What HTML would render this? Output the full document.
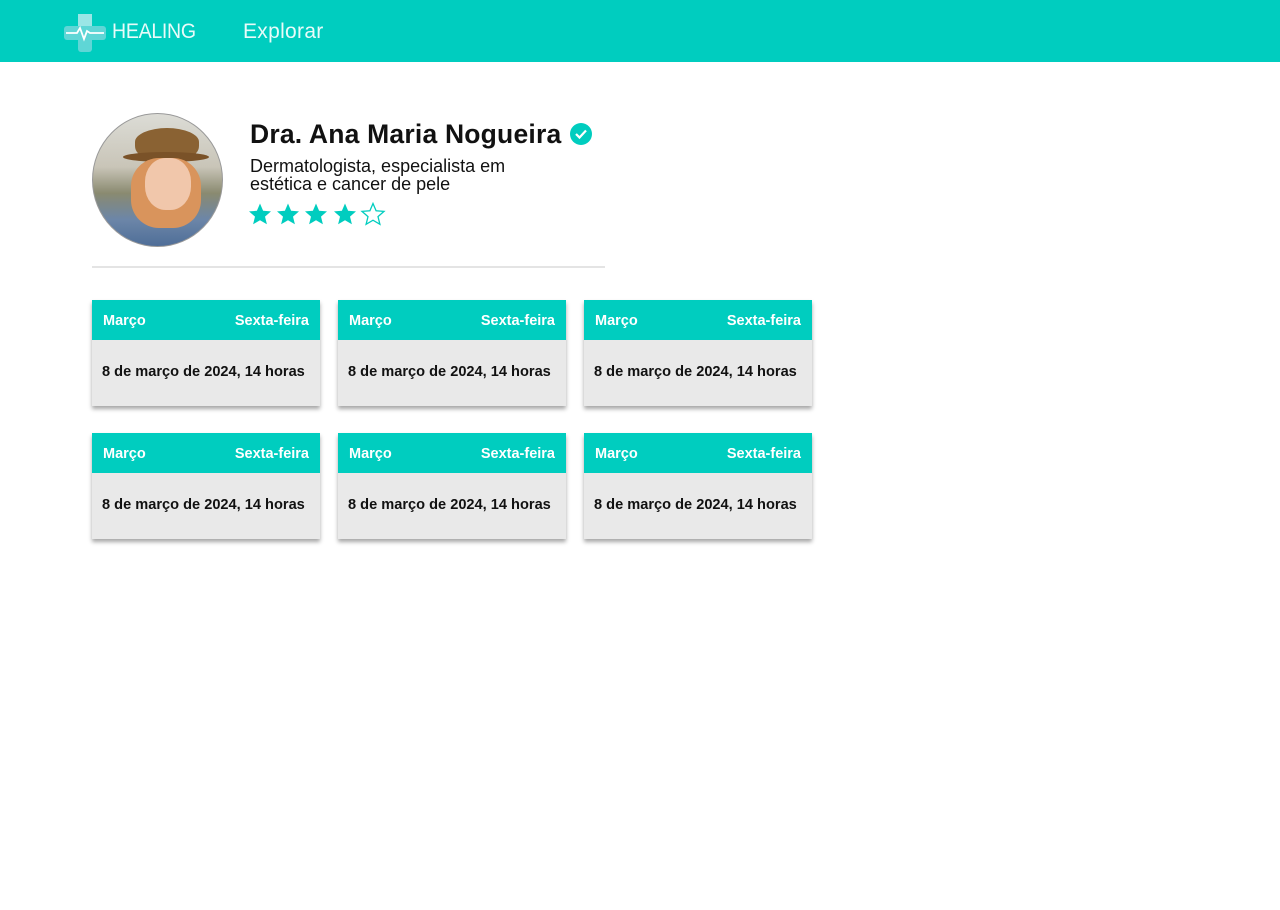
<!DOCTYPE html>
<html><head><meta charset="utf-8"><style>
*{margin:0;padding:0;box-sizing:border-box}
body{width:1280px;height:910px;background:#fff;font-family:"Liberation Sans",sans-serif;position:relative;overflow:hidden}
.nav{position:absolute;left:0;top:0;width:1280px;height:62px;background:#00cdbf}
.nav .t{position:absolute;color:#e8fbf9;font-size:21px;top:20px;letter-spacing:0.3px}
.av{position:absolute;left:92px;top:113px;width:131px;height:134px;border-radius:50%;border:1px solid #999;overflow:hidden;background:linear-gradient(180deg,#dcdcd6 0%,#c9c5b8 40%,#8a8a70 60%,#6c86a8 80%,#4f6e98 100%)}
.name{position:absolute;left:250px;top:119px;font-size:26.5px;font-weight:bold;color:#111;letter-spacing:0.2px}
.sub{position:absolute;left:250px;top:157px;font-size:18px;line-height:18px;color:#111}
.hr{position:absolute;left:92px;top:266px;width:513px;height:2px;background:#e4e4e4}
.card{position:absolute;width:228px;height:106px;background:#e9e9e9;box-shadow:0 3px 4px rgba(0,0,0,.35)}
.card .h{height:40px;background:#00cdbf;color:#fff;font-weight:bold;font-size:14.5px;display:flex;justify-content:space-between;align-items:center;padding:1px 11px 0}
.card .b{font-weight:bold;font-size:14.6px;color:#111;padding:24px 10px 0}
</style></head><body>
<div class="nav">
<svg style="position:absolute;left:63px;top:12px" width="44" height="42" viewBox="0 0 44 42">
<rect x="15" y="2" width="14" height="38" rx="3" fill="#5fd6d6"/>
<rect x="1" y="14" width="42" height="14" rx="3" fill="#5fd6d6"/>
<rect x="15" y="2" width="14" height="12" fill="#9ae6e6"/>
<polyline points="3,21 14,21 17,16 21,27 24,19 27,21 41,21" fill="none" stroke="#fff" stroke-width="1.8"/>
</svg>
<div class="t" style="left:112px;letter-spacing:-0.3px;transform:scaleX(0.93);transform-origin:left">HEALING</div>
<div class="t" style="left:243px">Explorar</div>
</div>
<div class="av">
<div style="position:absolute;left:42px;top:14px;width:64px;height:28px;border-radius:50% 50% 10px 10px;background:#8a6233"></div>
<div style="position:absolute;left:30px;top:38px;width:86px;height:10px;border-radius:50%;background:#7a5228"></div>
<div style="position:absolute;left:38px;top:44px;width:70px;height:70px;border-radius:40%;background:#d9945c"></div>
<div style="position:absolute;left:52px;top:44px;width:46px;height:52px;border-radius:45%;background:#f1c7ab"></div>
</div>
<div class="name">Dra. Ana Maria Nogueira <svg style="vertical-align:-3px" width="24" height="24" viewBox="0 0 24 24"><circle cx="12" cy="12" r="11" fill="#00cdbf"/><polyline points="7,12 10.5,15.5 17,8.5" fill="none" stroke="#fff" stroke-width="2.2"/></svg></div>
<div class="sub">Dermatologista, especialista em<br>estética e cancer de pele</div>
<svg style="position:absolute;left:248px;top:202px" width="140" height="26" viewBox="0 0 140 26">
<defs><path id="s" d="M12 1.5l3.1 7.3 7.9.6-6 5.2 1.9 7.7L12 18.2l-6.9 4.1 1.9-7.7-6-5.2 7.9-.6z"/></defs>
<use href="#s" fill="#00cdbf"/><use href="#s" x="28" fill="#00cdbf"/><use href="#s" x="56" fill="#00cdbf"/><use href="#s" x="85" fill="#00cdbf"/><use href="#s" x="113" fill="none" stroke="#00cdbf" stroke-width="1.3"/>
</svg>
<div class="hr"></div>
<div class="card" style="left:92px;top:300px"><div class="h"><span>Março</span><span>Sexta-feira</span></div><div class="b">8 de março de 2024, 14 horas</div></div>
<div class="card" style="left:338px;top:300px"><div class="h"><span>Março</span><span>Sexta-feira</span></div><div class="b">8 de março de 2024, 14 horas</div></div>
<div class="card" style="left:584px;top:300px"><div class="h"><span>Março</span><span>Sexta-feira</span></div><div class="b">8 de março de 2024, 14 horas</div></div>
<div class="card" style="left:92px;top:433px"><div class="h"><span>Março</span><span>Sexta-feira</span></div><div class="b">8 de março de 2024, 14 horas</div></div>
<div class="card" style="left:338px;top:433px"><div class="h"><span>Março</span><span>Sexta-feira</span></div><div class="b">8 de março de 2024, 14 horas</div></div>
<div class="card" style="left:584px;top:433px"><div class="h"><span>Março</span><span>Sexta-feira</span></div><div class="b">8 de março de 2024, 14 horas</div></div>
</body></html>
